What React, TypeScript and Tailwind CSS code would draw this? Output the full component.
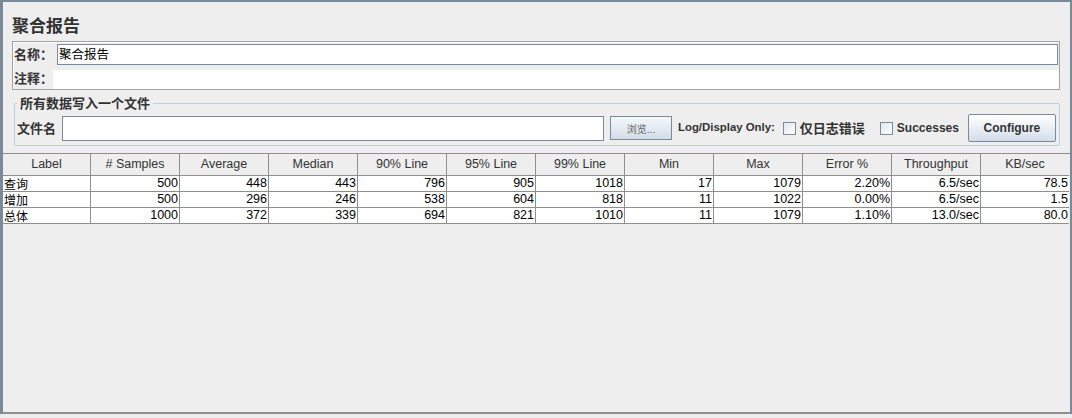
const cjk = "font-['Noto_Sans_CJK_SC',sans-serif]";
const latin = "font-['Liberation_Sans','Noto_Sans_CJK_SC',sans-serif]";

const columns = [
  "Label",
  "# Samples",
  "Average",
  "Median",
  "90% Line",
  "95% Line",
  "99% Line",
  "Min",
  "Max",
  "Error %",
  "Throughput",
  "KB/sec",
];

const rows = [
  ["查询", "500", "448", "443", "796", "905", "1018", "17", "1079", "2.20%", "6.5/sec", "78.5"],
  ["增加", "500", "296", "246", "538", "604", "818", "11", "1022", "0.00%", "6.5/sec", "1.5"],
  ["总体", "1000", "372", "339", "694", "821", "1010", "11", "1079", "1.10%", "13.0/sec", "80.0"],
];

function Checkbox() {
  return (
    <span className="inline-block h-[13px] w-[13px] shrink-0 border border-[#7a8a99] bg-gradient-to-br from-[#dfe6ee] to-white" />
  );
}

export default function App() {
  return (
    <div className={`h-[418px] w-[1072px] bg-[#eeeeee] ${latin}`}>
      <div className="flex h-[414px] flex-col border-l-[3px] border-r-2 border-t-2 border-[#7b8a99]">
        {/* title */}
        <div className={`pl-[9px] pt-[10px] text-[17px] font-bold leading-[26px] text-[#333] ${cjk}`}>
          聚合报告
        </div>

        {/* name / comment */}
        <div className="ml-[9px] mr-[10px] mt-[3px] border border-[#a2a2a2] shadow-[inset_1px_1px_0_#fff]">
          <div className="flex h-[24px] items-center">
            <span className={`w-[44px] shrink-0 whitespace-nowrap pl-[1px] text-[13px] font-bold text-[#333] ${cjk}`}>名称：</span>
            <div className={`mr-[1px] flex h-[21px] flex-1 items-center border border-[#7a8a99] bg-white pl-[1px] text-[12.5px] text-black ${cjk}`}>
              聚合报告
            </div>
          </div>
          <div className="flex h-[23px] items-end">
            <span className={`mb-[2px] w-[40px] shrink-0 whitespace-nowrap pl-[1px] text-[13px] font-bold text-[#333] ${cjk}`}>注释：</span>
            <div className="h-[19px] flex-1 bg-white" />
          </div>
        </div>

        {/* write to file */}
        <div className="relative ml-[11px] mr-[10px] mt-[13px] h-[43px] rounded-[2px] border border-[#b8cfe5]">
          <span className={`absolute -top-[10px] left-[2px] whitespace-nowrap bg-[#eeeeee] px-[3px] text-[13px] font-bold leading-[18px] text-[#333] ${cjk}`}>
            所有数据写入一个文件
          </span>
          <div className="flex h-full items-center whitespace-nowrap pb-[2px] pl-[2px] pt-[9px]">
            <span className={`w-[45px] shrink-0 text-[13px] font-bold text-[#333] ${cjk}`}>文件名</span>
            <div className="h-[25px] w-[542px] shrink-0 border border-[#7a8a99] bg-white" />
            <button className={`ml-[6px] flex h-[24px] w-[62px] shrink-0 items-center justify-center border border-[#7a8a99] bg-gradient-to-b from-[#f4f7fa] to-[#d3deea] text-[10px] text-[#666] ${cjk}`}>
              浏览...
            </button>
            <span className="ml-[6px] shrink-0 text-[11.4px] font-bold text-[#333]">Log/Display Only:</span>
            <span className="ml-[8px] flex shrink-0 items-center">
              <Checkbox />
            </span>
            <span className={`ml-[4px] shrink-0 text-[13px] font-bold text-[#333] ${cjk}`}>仅日志错误</span>
            <span className="ml-[15px] flex shrink-0 items-center">
              <Checkbox />
            </span>
            <span className="ml-[4px] shrink-0 text-[12px] font-bold text-[#333]">Successes</span>
            <button className="ml-[9px] h-[28px] w-[88px] shrink-0 rounded-[2px] border border-[#7a8a99] bg-gradient-to-b from-white to-[#d3deea] text-[12px] font-bold text-[#333]">
              Configure
            </button>
          </div>
        </div>

        {/* table */}
        <div className="mt-[7px] flex-1 border-b-[2px] border-t border-[#8e8e8e]">
          <div className="grid grid-cols-[88px_repeat(10,89px)_88px]">
            {columns.map((c, i) => (
              <div
                key={c}
                className={`flex h-[22px] items-center justify-center whitespace-nowrap border-b border-[#8e8e8e] bg-[#eeeeee] text-[12.5px] text-[#333] ${i < 11 ? "border-r" : ""}`}
              >
                {c}
              </div>
            ))}
            {rows.map((r) =>
              r.map((v, i) => (
                <div
                  key={r[0] + i}
                  className={`flex h-[16px] items-center whitespace-nowrap border-b border-[#8e8e8e] bg-white leading-none text-black ${i < 11 ? "border-r" : ""} ${i === 0 ? `justify-start pl-[1px] text-[12px] ${cjk}` : "justify-end pr-[1px] text-[12.5px]"}`}
                >
                  {v}
                </div>
              ))
            )}
          </div>
        </div>
      </div>
    </div>
  );
}
